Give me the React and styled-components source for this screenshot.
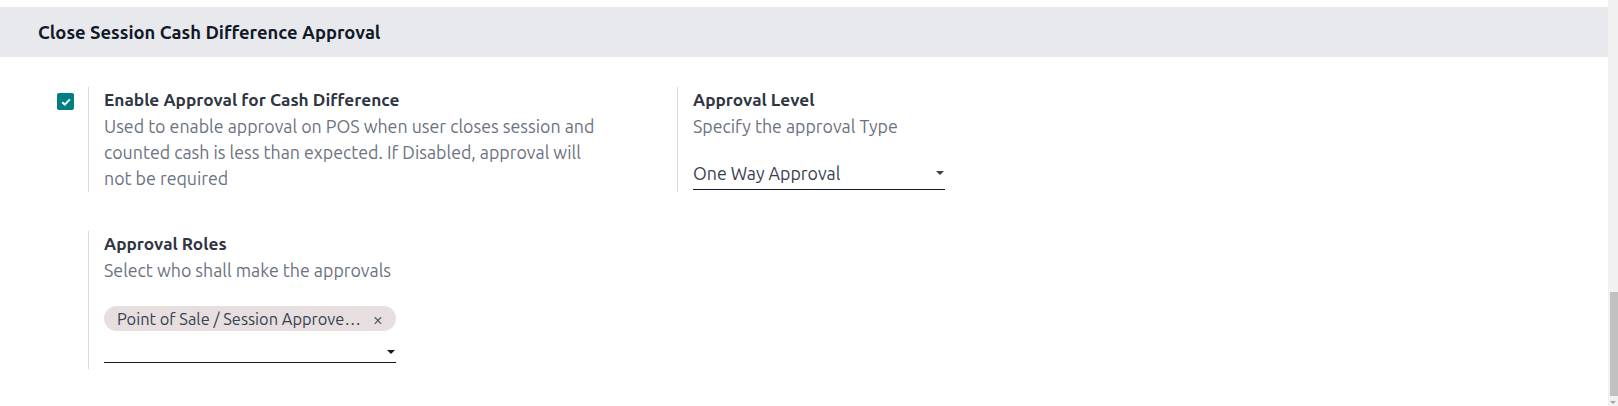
import React from 'react'
import styled, { createGlobalStyle } from 'styled-components'

const GlobalStyle = createGlobalStyle`
  html, body {
    margin: 0;
    padding: 0;
    background: #ffffff;
    overflow: hidden;
  }
  body {
    font-family: Ubuntu, Lato, "Noto Sans", sans-serif;
    color: #374151;
  }
`

const Page = styled.div`
  display: flex;
  width: 1618px;
  height: 406px;
  overflow: hidden;
`

const Main = styled.main`
  flex: 1;
  padding-top: 7px;
`

const SectionHeader = styled.h2`
  margin: 0;
  height: 50px;
  display: flex;
  align-items: center;
  padding-left: 38px;
  background: #e7e9ed;
  color: #111827;
  font-size: 18.4px;
  font-weight: 700;
`

const SettingsGrid = styled.div`
  display: grid;
  grid-template-columns: 589px 589px;
  row-gap: 39px;
  padding: 30px 0 0 40px;
`

const SettingBox = styled.div`
  display: flex;
`

const LeftPane = styled.div`
  width: 48px;
  flex: none;
  padding: 6px 0 0 17px;
  box-sizing: border-box;
`

const RightPane = styled.div`
  flex: 1;
  border-left: 1px solid #d8dadd;
  padding: 0 0 ${p => p.$bottom || 1}px 15px;
`

const Checkbox = styled.span`
  display: flex;
  align-items: center;
  justify-content: center;
  width: 17px;
  height: 17px;
  border-radius: 2px;
  background: #017e84;
`

const Label = styled.div`
  font-size: 17.3px;
  line-height: 26px;
  font-weight: 700;
  color: #2f3542;
`

const Description = styled.div`
  font-size: 17.8px;
  line-height: 26px;
  color: #6b7280;
  max-width: 498px;
`

const Caret = styled.span`
  width: 0;
  height: 0;
  border-left: 4px solid transparent;
  border-right: 4px solid transparent;
  border-top: 4px solid ${p => p.$color || '#374151'};
`

const Select = styled.div`
  display: flex;
  align-items: center;
  justify-content: space-between;
  width: 252px;
  height: 34px;
  margin-top: 17px;
  padding-right: 1px;
  box-sizing: border-box;
  border-bottom: 1px solid #111827;
  font-size: 17.75px;
  color: #374151;
`

const TagField = styled.div`
  width: 292px;
  margin-top: 23px;
`

const Tag = styled.span`
  display: flex;
  align-items: center;
  justify-content: space-between;
  height: 25px;
  padding: 0 13px 0 13px;
  border-radius: 13px;
  background: #e7dfdf;
  font-size: 16.4px;
  color: #374151;
  white-space: nowrap;
`

const TagRemove = styled.span`
  font-size: 18px;
  line-height: 1;
  color: #4b5563;
  margin-left: 8px;
`

const TagInput = styled.div`
  display: flex;
  align-items: flex-end;
  justify-content: flex-end;
  height: 32px;
  box-sizing: border-box;
  padding: 0 1px 8px 0;
  border-bottom: 1px solid #111827;
`

const ScrollTrack = styled.div`
  width: 10px;
  flex: none;
  background: #f1f1f1;
  display: flex;
  flex-direction: column;
  align-items: flex-end;
`

const ScrollSpace = styled.div`
  flex: 1;
`

const ScrollThumb = styled.div`
  width: 8px;
  height: 104px;
  background: #c1c1c1;
`

const ScrollArrow = styled.div`
  align-self: center;
  margin: 5px 0 2px;
  width: 0;
  height: 0;
  border-left: 3px solid transparent;
  border-right: 3px solid transparent;
  border-top: 3px solid #a3a3a3;
`

const CheckIcon = () => (
  <svg width="10" height="8" viewBox="0 0 10 8">
    <path d="M1.2 4.2 L3.8 6.6 L8.8 1.4" fill="none" stroke="#ffffff" strokeWidth="2" />
  </svg>
)

const App = () => (
  <>
    <GlobalStyle />
    <Page>
      <Main>
        <SectionHeader>Close Session Cash Difference Approval</SectionHeader>
        <SettingsGrid>
          <SettingBox>
            <LeftPane>
              <Checkbox>
                <CheckIcon />
              </Checkbox>
            </LeftPane>
            <RightPane>
              <Label>Enable Approval for Cash Difference</Label>
              <Description>
                Used to enable approval on POS when user closes session and counted cash is less
                than expected. If Disabled, approval will not be required
              </Description>
            </RightPane>
          </SettingBox>
          <SettingBox>
            <LeftPane />
            <RightPane>
              <Label>Approval Level</Label>
              <Description>Specify the approval Type</Description>
              <Select>
                <span>One Way Approval</span>
                <Caret />
              </Select>
            </RightPane>
          </SettingBox>
          <SettingBox>
            <LeftPane />
            <RightPane $bottom={6}>
              <Label>Approval Roles</Label>
              <Description>Select who shall make the approvals</Description>
              <TagField>
                <Tag>
                  <span>Point of Sale / Session Approve…</span>
                  <TagRemove>×</TagRemove>
                </Tag>
                <TagInput>
                  <Caret $color="#111827" />
                </TagInput>
              </TagField>
            </RightPane>
          </SettingBox>
        </SettingsGrid>
      </Main>
      <ScrollTrack>
        <ScrollSpace />
        <ScrollThumb />
        <ScrollArrow />
      </ScrollTrack>
    </Page>
  </>
)

export default App
